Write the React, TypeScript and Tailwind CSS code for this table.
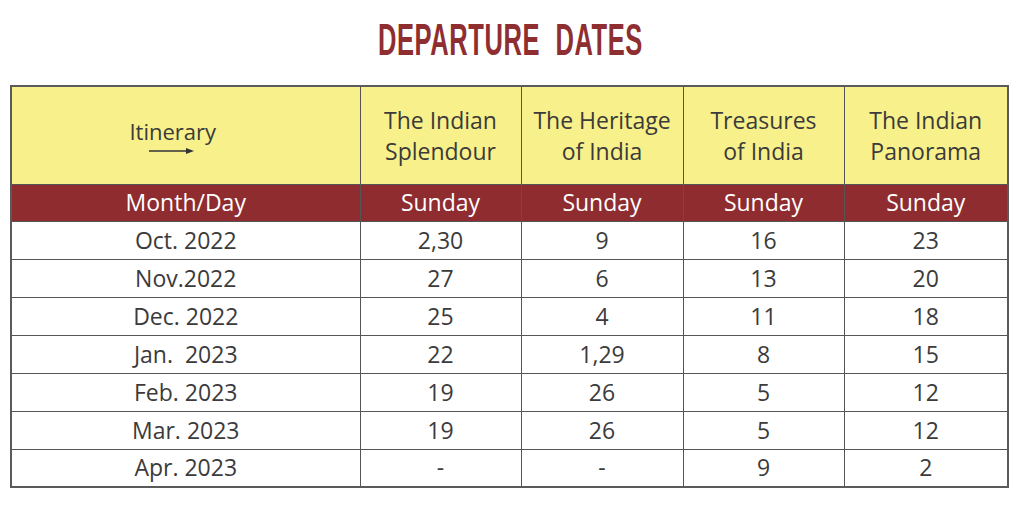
const columns = [
  ["The Indian", "Splendour"],
  ["The Heritage", "of India"],
  ["Treasures", "of India"],
  ["The Indian", "Panorama"],
];

const rows: [string, string, string, string, string][] = [
  ["Oct. 2022", "2,30", "9", "16", "23"],
  ["Nov.2022", "27", "6", "13", "20"],
  ["Dec. 2022", "25", "4", "11", "18"],
  ["Jan.  2023", "22", "1,29", "8", "15"],
  ["Feb. 2023", "19", "26", "5", "12"],
  ["Mar. 2023", "19", "26", "5", "12"],
  ["Apr. 2023", "-", "-", "9", "2"],
];

export default function App() {
  return (
    <div className="w-[1024px] h-[505px] bg-white font-['Open_Sans',sans-serif] text-[#3b3b3b]">
      <div className="h-[85px] flex items-start justify-center pt-[12px]">
        <h1 className="inline-block scale-x-[0.58] translate-x-[-2px] font-['Liberation_Sans_Narrow','Liberation_Sans',sans-serif] font-bold text-[44px] leading-[56px] tracking-[1px] text-[#8f2e31] whitespace-pre">
          DEPARTURE  DATES
        </h1>
      </div>

      <table className="ml-[10px] w-[999px] table-fixed border-collapse border-2 border-[#5a5a5a] text-[23px] text-center">
        <colgroup>
          <col className="w-[349px]" />
          <col className="w-[161px]" />
          <col className="w-[162px]" />
          <col className="w-[161px]" />
          <col />
        </colgroup>
        <thead>
          <tr className="h-[98px] bg-[#f8f08a]">
            <th className="border border-[#555] font-normal">
              <div className="flex flex-col items-center pr-[26px] pt-[2px]">
                <span className="text-[22px] leading-[28px]">Itinerary</span>
                <svg width="46" height="8" viewBox="0 0 46 8" className="mt-[2px] ml-[-2px]">
                  <line x1="0" y1="4" x2="40" y2="4" stroke="#333" strokeWidth="1.4" />
                  <path d="M37 1 L45 4 L37 7 Z" fill="#333" />
                </svg>
              </div>
            </th>
            {columns.map((c, i) => (
              <th key={i} className="border border-[#555] font-normal leading-[31px] pt-[2px]">
                {c[0]}
                <br />
                {c[1]}
              </th>
            ))}
          </tr>
          <tr className="h-[37px] bg-[#8e2c30] text-white">
            <th className="border border-[#555] font-normal leading-none">Month/Day</th>
            {columns.map((_, i) => (
              <th key={i} className="border border-[#555] font-normal leading-none">
                Sunday
              </th>
            ))}
          </tr>
        </thead>
        <tbody>
          {rows.map((r, i) => (
            <tr key={i} className="h-[38px]">
              {r.map((v, j) => (
                <td key={j} className="border border-[#555] leading-none whitespace-pre">
                  {v}
                </td>
              ))}
            </tr>
          ))}
        </tbody>
      </table>
    </div>
  );
}
